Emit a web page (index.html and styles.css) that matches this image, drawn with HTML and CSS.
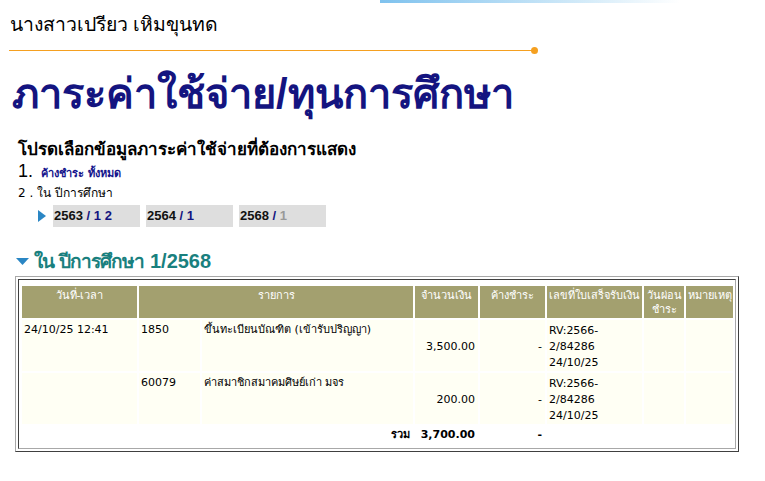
FILE: index.html
```html
<!DOCTYPE html>
<html lang="th">
<head>
<meta charset="utf-8">
<title>ภาระค่าใช้จ่าย/ทุนการศึกษา</title>
<link rel="stylesheet" href="styles.css">
</head>
<body>
<div class="topbar"></div>
<div class="name">นางสาวเปรียว เหิมขุนทด</div>
<div class="rule"><span class="dot"></span></div>
<h1 class="title">ภาระค่าใช้จ่าย/ทุนการศึกษา</h1>
<div class="select">
  <div class="prompt">โปรดเลือกข้อมูลภาระค่าใช้จ่ายที่ต้องการแสดง</div>
  <div class="opt1"><span class="num">1.</span> <a class="all">ค้างชำระ ทั้งหมด</a></div>
  <div class="opt2">2 . ใน ปีการศึกษา</div>
  <div class="years">
    <svg class="arrow" width="8" height="12" viewBox="0 0 8 12"><path d="M0 0 L8 6 L0 12 Z" fill="#2a86c4"/></svg>
    <div class="year"><b>2563</b> <span class="sl">/</span> <span class="sem">1</span> <span class="sem">2</span></div>
    <div class="year"><b>2564</b> <span class="sl">/</span> <span class="sem">1</span></div>
    <div class="year"><b>2568</b> <span class="sl">/</span> <span class="sem dim">1</span></div>
  </div>
</div>
<h2 class="sub"><svg class="down" width="13" height="8" viewBox="0 0 13 8"><path d="M0 0 L13 0 L6.5 7 Z" fill="#2a86c4"/></svg><span class="subtext"><span class="subth">ใน ปีการศึกษา</span> 1/2568</span></h2>
<div class="outer">
  <div class="inner">
    <table class="grid">
      <colgroup>
        <col class="c1"><col class="c2a"><col class="c2b"><col class="c3"><col class="c4"><col class="c5"><col class="c6"><col class="c7">
      </colgroup>
      <thead>
        <tr>
          <th>วันที่-เวลา</th>
          <th colspan="2">รายการ</th>
          <th>จำนวนเงิน</th>
          <th>ค้างชำระ</th>
          <th>เลขที่ใบเสร็จรับเงิน</th>
          <th>วันผ่อน ชำระ</th>
          <th>หมายเหตุ</th>
        </tr>
      </thead>
      <tbody>
        <tr class="row">
          <td>24/10/25 12:41</td>
          <td>1850</td>
          <td>ขึ้นทะเบียนบัณฑิต (เข้ารับปริญญา)</td>
          <td class="money">3,500.00</td>
          <td class="money">-</td>
          <td class="rv">RV:2566-<br>2/84286<br>24/10/25</td>
          <td></td>
          <td></td>
        </tr>
        <tr class="row">
          <td></td>
          <td>60079</td>
          <td>ค่าสมาชิกสมาคมศิษย์เก่า มจร</td>
          <td class="money">200.00</td>
          <td class="money">-</td>
          <td class="rv">RV:2566-<br>2/84286<br>24/10/25</td>
          <td></td>
          <td></td>
        </tr>
        <tr class="total">
          <td colspan="3" class="tl">รวม</td>
          <td class="money">3,700.00</td>
          <td class="money">-</td>
          <td></td>
          <td></td>
          <td></td>
        </tr>
      </tbody>
    </table>
  </div>
</div>
</body>
</html>
```

FILE: styles.css
```css
html, body {
  margin: 0;
  padding: 0;
  background: #ffffff;
}
body {
  font-family: "DejaVu Sans", "Liberation Sans", sans-serif;
  color: #000;
}
.topbar {
  height: 3px;
  margin-left: 380px;
  width: 300px;
  background: linear-gradient(to right, #7fc2ee, #d6ecf9 70%, #ffffff);
}
.name {
  margin: 9px 0 0 10px;
  font-size: 19.4px;
  line-height: 24px;
  font-family: "Liberation Sans", sans-serif;
}
.rule {
  position: relative;
  margin: 14px 0 0 9px;
  width: 526px;
  height: 1px;
  background: #f5a020;
}
.dot {
  position: absolute;
  right: -3px;
  top: -3px;
  width: 7px;
  height: 7px;
  border-radius: 50%;
  background: #f5a020;
}
.title {
  margin: 15px 0 0 12px;
  font-size: 41.6px;
  line-height: 56px;
  color: #141480;
  font-weight: bold;
  font-family: "Liberation Sans", sans-serif;
}
.select {
  margin: 17px 0 0 18px;
}
.prompt {
  font-size: 17px;
  font-weight: bold;
  line-height: 22px;
  font-family: "Liberation Sans", sans-serif;
}
.opt1 {
  line-height: 20px;
}
.num {
  font-size: 18px;
  font-family: "Liberation Sans", sans-serif;
}
.all {
  margin-left: 3px;
  font-size: 11px;
  font-weight: bold;
  color: #14148c;
}
.opt2 {
  font-size: 12px;
  line-height: 20px;
  margin-top: -1px;
}
.years {
  display: flex;
  align-items: center;
  margin: 2px 0 0 20px;
  gap: 6px;
}
.arrow {
  margin-right: 1px;
}
.year {
  width: 87px;
  height: 22px;
  padding-left: 1px;
  box-sizing: border-box;
  background: #dedede;
  font-family: "Liberation Sans", sans-serif;
  font-size: 13px;
  line-height: 22px;
  font-weight: bold;
  color: #111;
}
.sl, .sem {
  color: #141480;
}
.dim {
  color: #999;
}
.sub {
  display: flex;
  align-items: center;
  gap: 5px;
  margin: 22px 0 0 16px;
  font-size: 20px;
  line-height: 24px;
  color: #19807e;
  font-weight: bold;
  font-family: "Liberation Sans", sans-serif;
}
.subth {
  font-size: 19px;
  letter-spacing: -0.9px;
}
.outer {
  margin: 2px 0 0 15px;
  width: 724px;
  border: 1px solid;
  border-color: #a8a8a8 #404040 #404040 #a8a8a8;
  padding: 2px;
  box-sizing: border-box;
}
.inner {
  border: 1px solid;
  border-color: #404040 #a8a8a8 #a8a8a8 #404040;
  padding: 4px 0 1px 1px;
}
.grid {
  width: 100%;
  border-collapse: separate;
  border-spacing: 2px;
  table-layout: fixed;
  font-size: 11px;
}
.c1 { width: 115px; }
.c2a { width: 61px; }
.c2b { width: 211px; }
.c3 { width: 63px; }
.c4 { width: 65px; }
.c5 { width: 95px; }
.c6 { width: 40px; }
.c7 { width: auto; }
th {
  background: #a3a06f;
  color: #fff;
  font-weight: normal;
  font-size: 11px;
  height: 29px;
  vertical-align: top;
  padding: 3px 1px 0;
  line-height: 14px;
}
td {
  padding: 1px 2px;
  vertical-align: top;
  line-height: 16px;
}
.row td {
  background: #fffff4;
  height: 49px;
  padding: 2px 2px 0;
}
.row td.money {
  vertical-align: middle;
  text-align: right;
  padding-right: 3px;
}
.row td.rv {
  vertical-align: middle;
}
.total td {
  font-weight: bold;
  height: 17px;
  line-height: 14px;
  padding-top: 2px;
  padding-bottom: 0;
}
.total td.money, .total td.tl {
  text-align: right;
  padding-right: 3px;
}
```
